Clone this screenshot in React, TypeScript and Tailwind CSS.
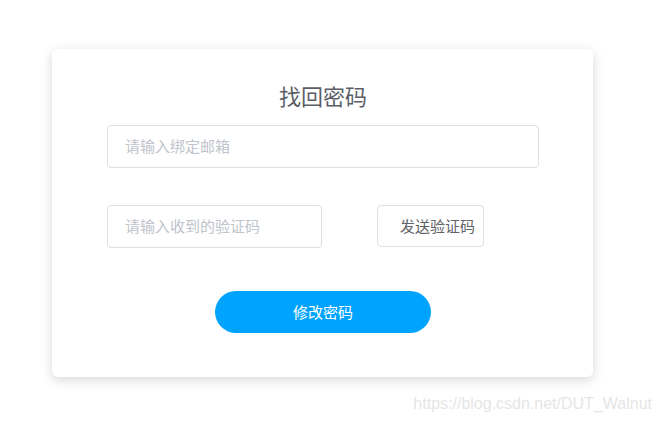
import React from "react";

export default function App() {
  const cjk = { fontFamily: '"Microsoft YaHei", "Noto Sans CJK SC", "Noto Sans", sans-serif' };
  return (
    <div className="relative w-[662px] h-[422px] bg-white overflow-hidden" style={cjk}>
      <div className="pt-[49px] pl-[52px]">
        <div className="w-[541px] h-[328px] bg-white rounded-[6px] shadow-[0_3px_12px_rgba(0,0,0,0.16)] pt-[31px] pl-[55px] pr-[54px] flex flex-col">
          <h1 className="text-[22px] leading-[30px] text-[#5b5e66] text-center">找回密码</h1>
          <div className="mt-[15px] h-[43px] border border-[#dcdfe6] rounded-[4px] flex items-center pl-[17px] text-[15px] text-[#c0c4cc]">
            请输入绑定邮箱
          </div>
          <div className="mt-[37px] flex items-start">
            <div className="w-[215px] h-[43px] border border-[#dcdfe6] rounded-[4px] flex items-center pl-[17px] text-[15px] text-[#c0c4cc]">
              请输入收到的验证码
            </div>
            <div className="ml-[55px] w-[107px] h-[42px] border border-[#dcdfe6] rounded-[4px] flex items-center pl-[22px] text-[15px] text-[#5f6266] whitespace-nowrap">
              发送验证码
            </div>
          </div>
          <div className="mt-[43px] flex justify-center">
            <div className="w-[216px] h-[42px] rounded-full bg-[#00a4ff] flex items-center justify-center text-white text-[15px]">
              修改密码
            </div>
          </div>
        </div>
      </div>
      <div
        className="absolute right-[10px] top-[392px] text-[16px] leading-[24px] text-[#e6e6e6]"
        style={{ fontFamily: '"Liberation Sans", Arial, sans-serif' }}
      >
        https://blog.csdn.net/DUT_Walnut
      </div>
    </div>
  );
}
